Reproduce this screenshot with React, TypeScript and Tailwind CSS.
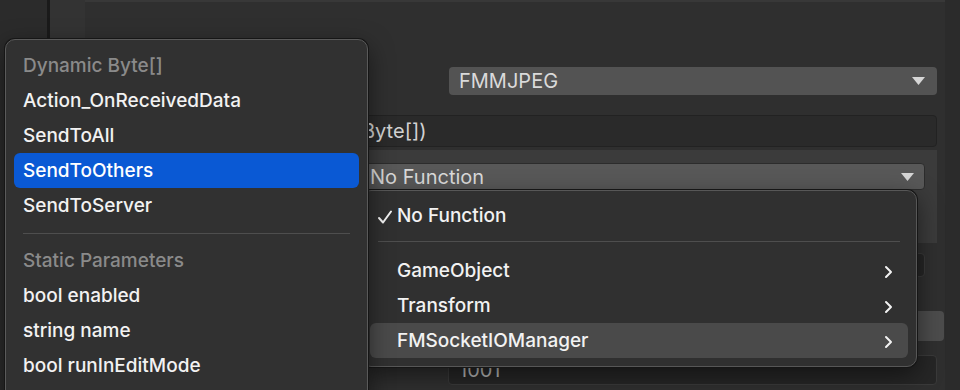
import React from "react";

const LEFT_ITEMS: { label: string; kind: "header" | "item" | "sep"; selected?: boolean }[] = [
  { label: "Dynamic Byte[]", kind: "header" },
  { label: "Action_OnReceivedData", kind: "item" },
  { label: "SendToAll", kind: "item" },
  { label: "SendToOthers", kind: "item", selected: true },
  { label: "SendToServer", kind: "item" },
  { label: "", kind: "sep" },
  { label: "Static Parameters", kind: "header" },
  { label: "bool enabled", kind: "item" },
  { label: "string name", kind: "item" },
  { label: "bool runInEditMode", kind: "item" },
];

const SUBMENUS = ["GameObject", "Transform", "FMSocketIOManager"];

function DownArrow() {
  return (
    <svg width="13" height="8" viewBox="0 0 13 8">
      <polygon points="0,0 13,0 6.5,8" fill="#d6d6d6" />
    </svg>
  );
}

function Chevron() {
  return (
    <svg width="9" height="14" viewBox="0 0 9 14" fill="none">
      <polyline
        points="2,2 7,7 2,12"
        stroke="#f2f2f2"
        strokeWidth="2"
        strokeLinecap="round"
        strokeLinejoin="round"
      />
    </svg>
  );
}

function Check() {
  return (
    <svg width="16" height="16" viewBox="0 0 16 16" fill="none">
      <path
        d="M2 9L6 13.5L14 2.5"
        stroke="#f2f2f2"
        strokeWidth="2"
        strokeLinecap="round"
        strokeLinejoin="round"
      />
    </svg>
  );
}

export default function App() {
  return (
    <div className="relative w-[960px] h-[390px] overflow-hidden bg-[#2f2f2f] font-['Inter',sans-serif]">
      {/* Inspector behind the menus */}
      <div className="flex h-full">
        <div className="w-[47px] bg-[#2b2b2b]" />
        <div className="w-[3px] bg-[#1a1a1a]" />
        <div className="w-[35px] bg-[#333333]" />
        <div className="flex-1 flex flex-col border-t-2 border-[#383838]">
          <div className="h-[65px]" />
          <div className="ml-[364px] mr-[8px] h-[28px] rounded-[4px] bg-[#535353] flex items-center justify-between pl-[10px] pr-[12px] text-[20px] text-[#dadada]">
            <span>FMMJPEG</span>
            <DownArrow />
          </div>
          <div className="mt-[20px] ml-[265px] mr-[8px] h-[32px] rounded-[4px] bg-[#2a2a2a] border border-[#222222] flex items-center pl-[11px] text-[20px] text-[#d2d2d2]">
            Byte[])
          </div>
          <div className="mt-[3px] ml-[255px] mr-[8px] h-[93px] bg-[#3b3b3b] pt-[13px] pl-[19px] pr-[12px]">
            <div className="h-[27px] rounded-[4px] bg-[#585858] border border-[#2c2c2c] flex items-center justify-between pl-[10px] pr-[10px] text-[20px] text-[#dadada]">
              <span>No Function</span>
              <DownArrow />
            </div>
          </div>
          <div className="mt-[10px] ml-[364px] mr-[20px] h-[24px] rounded-[4px] bg-[#262626] border border-[#3a3a3a]" />
          <div className="mt-[34px] h-[30px] flex justify-end">
            <div className="w-[64px] mr-[1px] rounded-[4px] bg-[#4c4c4c]" />
          </div>
          <div className="mt-[14px] ml-[363px] mr-[8px] h-[30px] rounded-[4px] bg-[#262626] border border-[#3a3a3a] flex items-center pl-[10px] text-[20px] text-[#b8b8b8]">
            1001
          </div>
        </div>
        <div className="w-[15px] bg-[#2b2b2b]" />
      </div>

      {/* Function popup */}
      <div className="absolute left-[361px] top-[190px] w-[556px] h-[177px] rounded-[10px] bg-[#303030] border border-[#575757] shadow-[0_0_0_1px_#161616,0_8px_24px_rgba(0,0,0,0.5)] pt-[7px] text-[19px] text-[#f2f2f2] font-medium">
        <div className="mx-[8px] h-[35px] flex items-center pl-[7px] pt-[2px]">
          <div className="w-[20px] flex items-center">
            <Check />
          </div>
          <span>No Function</span>
        </div>
        <div className="h-[20px] pt-[8px] px-[16px]">
          <div className="h-px bg-[#4e4e4e]" />
        </div>
        {SUBMENUS.map((name, i) => (
          <div
            key={name}
            className={`mx-[8px] h-[35px] rounded-[6px] flex items-center justify-between pl-[27px] pr-[15px] pt-[2px] ${
              i === SUBMENUS.length - 1 ? "bg-[#4a4a4a]" : ""
            }`}
          >
            <span>{name}</span>
            <Chevron />
          </div>
        ))}
      </div>

      {/* Method popup */}
      <div className="absolute left-[5px] top-[39px] w-[363px] h-[380px] rounded-[10px] bg-[#313131] border border-[#5a5a5a] shadow-[0_0_0_1px_#161616,0_8px_24px_rgba(0,0,0,0.5)] pt-[8px] text-[19px] font-medium">
        {LEFT_ITEMS.map((it, i) =>
          it.kind === "sep" ? (
            <div key={i} className="h-[20px] flex items-center px-[17px]">
              <div className="h-px w-full bg-[#4e4e4e]" />
            </div>
          ) : (
            <div
              key={i}
              className={`mx-[8px] h-[35px] rounded-[6px] flex items-center pl-[9px] pt-[2px] ${
                it.kind === "header"
                  ? "text-[#8a8a8a]"
                  : it.selected
                    ? "bg-[#0a59d4] text-white"
                    : "text-[#f2f2f2]"
              }`}
            >
              {it.label}
            </div>
          )
        )}
      </div>
    </div>
  );
}
